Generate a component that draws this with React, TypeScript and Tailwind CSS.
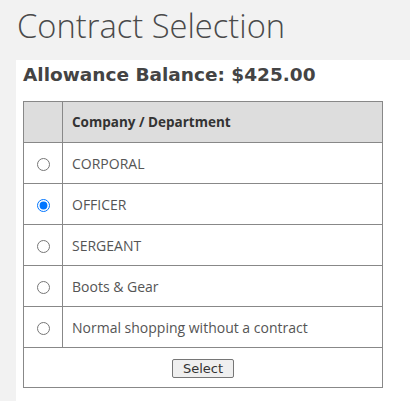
import React, { useState } from 'react'

const options = ['CORPORAL', 'OFFICER', 'SERGEANT', 'Boots & Gear', 'Normal shopping without a contract']

const App = () => {
  const [picked, setPicked] = useState(1)
  return (
    <div className="min-h-[401px] w-[410px] overflow-hidden bg-[#f2f2f2] font-['Open_Sans',sans-serif] text-[#444]">
      <h1 className="pl-[17px] pt-[5px] text-[32.7px] font-light leading-[42px] text-[#4a4a4a]">Contract Selection</h1>
      <div className="ml-[16px] mt-[13px] min-h-[341px] w-[420px] bg-white pl-[7px] pt-[2px]">
        <p className="font-['DejaVu_Sans',sans-serif] text-[18.5px] font-bold leading-[26px] text-[#444]">
          Allowance Balance: $425.00
        </p>
        <table className="mt-[13px] w-[360px] border-collapse border border-[#888] text-[14px] text-[#555]">
          <thead>
            <tr className="h-[41px] bg-[#dddddd]">
              <th className="w-[39px] border border-[#888]"></th>
              <th className="border border-[#888] pl-[9px] text-left text-[13.5px] font-bold text-[#333]">
                Company / Department
              </th>
            </tr>
          </thead>
          <tbody>
            {options.map((o, i) => (
              <tr key={o} className="h-[41px]">
                <td className="border border-[#888] text-center">
                  <input
                    type="radio"
                    name="contract"
                    checked={picked === i}
                    onChange={() => setPicked(i)}
                    className="m-0 h-[13px] w-[13px] align-middle"
                  />
                </td>
                <td className="border border-[#888] pl-[9px]">{o}</td>
              </tr>
            ))}
            <tr className="h-[40px]">
              <td colSpan={2} className="border border-[#888] text-center">
                <button className="rounded-[2px] border border-[#767676] bg-[#efefef] px-[10px] py-[1px] font-['DejaVu_Sans',sans-serif] text-[13px] leading-[15px] text-[#333]">
                  Select
                </button>
              </td>
            </tr>
          </tbody>
        </table>
      </div>
    </div>
  )
}

export default App
